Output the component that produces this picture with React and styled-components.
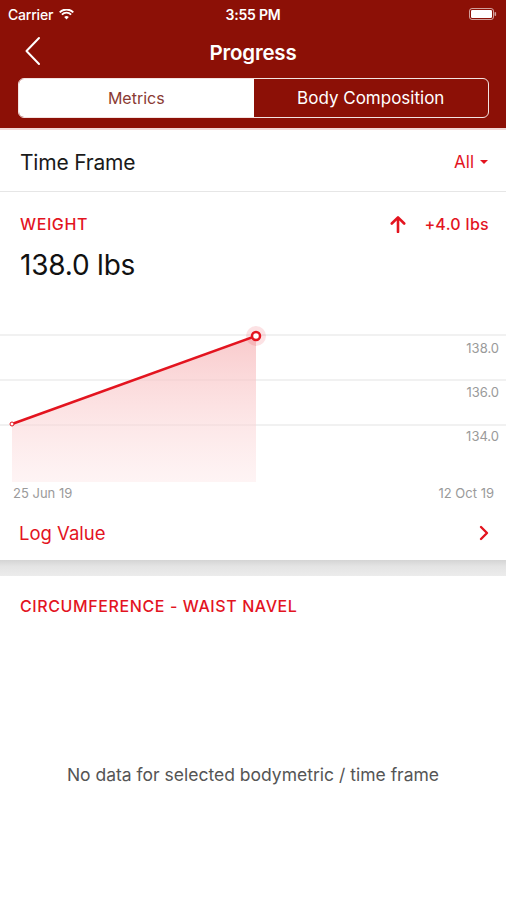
import React from "react";
import styled, { createGlobalStyle } from "styled-components";

const RED = "#8c1006";
const ACCENT = "#e3141f";

const Global = createGlobalStyle`
  html, body { margin: 0; padding: 0; background: #fff; }
  body { font-family: Inter, "Noto Sans", sans-serif; -webkit-font-smoothing: antialiased; }
  * { box-sizing: border-box; }
`;

const Page = styled.div`
  width: 506px;
  height: 900px;
  overflow: hidden;
  display: flex;
  flex-direction: column;
  background: #fff;
`;

const Header = styled.header`
  background: ${RED};
  color: #fff;
  display: flex;
  flex-direction: column;
  padding-bottom: 10px;
  border-bottom: 2px solid #f2d9d7;
`;

const StatusBar = styled.div`
  height: 28px;
  display: grid;
  grid-template-columns: 1fr auto 1fr;
  align-items: center;
  padding: 0 8px 0 8px;
  font-size: 14px;
  font-weight: 600;
  letter-spacing: -0.2px;
`;

const StatusLeft = styled.div`
  display: flex;
  align-items: center;
  gap: 6px;
  font-weight: 500;
`;

const StatusRight = styled.div`
  display: flex;
  justify-content: flex-end;
  padding-right: 1px;
`;

const NavBar = styled.div`
  height: 48px;
  position: relative;
  display: flex;
  align-items: center;
  justify-content: center;
`;

const BackButton = styled.div`
  position: absolute;
  left: 24px;
  top: 8px;
  display: flex;
`;

const Title = styled.h1`
  margin: 0;
  font-size: 20.5px;
  font-weight: 600;
  letter-spacing: -0.2px;
`;

const Segmented = styled.div`
  margin: 2px 17px 0 18px;
  height: 40px;
  border: 1.5px solid #f3e3e1;
  border-radius: 6px;
  display: grid;
  grid-template-columns: 1fr 1fr;
  overflow: hidden;
`;

const Segment = styled.div`
  display: flex;
  align-items: center;
  justify-content: center;
  font-size: ${(p) => (p.$active ? "16px" : "17px")};
  background: ${(p) => (p.$active ? "#fff" : "transparent")};
  color: ${(p) => (p.$active ? "#8a3a33" : "#fff")};
  font-weight: 400;
`;

const Card = styled.section`
  background: #fff;
  display: flex;
  flex-direction: column;
`;

const TimeRow = styled.div`
  height: 62px;
  display: flex;
  align-items: center;
  justify-content: space-between;
  padding: 3px 18px 0 20px;
  border-bottom: 1.5px solid #e6e6e6;
`;

const RowLabel = styled.span`
  font-size: 21px;
  color: #1a1a1a;
  letter-spacing: -0.2px;
`;

const Dropdown = styled.span`
  display: flex;
  align-items: center;
  gap: 6px;
  color: ${ACCENT};
  font-size: 17px;
`;

const Caret = styled.span`
  width: 0;
  height: 0;
  border-left: 4px solid transparent;
  border-right: 4px solid transparent;
  border-top: 4px solid ${ACCENT};
`;

const MetricHead = styled.div`
  display: flex;
  align-items: center;
  justify-content: space-between;
  padding: 16px 17px 0 20px;
  height: 48px;
`;

const MetricLabel = styled.span`
  color: ${ACCENT};
  font-size: 16px;
  font-weight: 500;
  letter-spacing: 0.6px;
`;

const Change = styled.span`
  display: flex;
  align-items: center;
  gap: 18px;
  color: ${ACCENT};
  font-size: 16px;
  font-weight: 500;
  letter-spacing: 0.3px;
`;

const BigValue = styled.div`
  padding: 8px 20px 0;
  font-size: 28px;
  line-height: 34px;
  color: #111;
  height: 60px;
  letter-spacing: -0.2px;
`;

const ChartWrap = styled.div`
  height: 208px;
`;

const LogRow = styled.div`
  height: 52px;
  display: flex;
  align-items: center;
  justify-content: space-between;
  padding: 0 17px 2px 19px;
  color: ${ACCENT};
  font-size: 18.5px;
`;

const Gap = styled.div`
  height: 16px;
  background: linear-gradient(#d4d4d4, #e4e4e4 40%, #ececec);
`;

const Card2 = styled(Card)`
  flex: 1;
`;

const Card2Head = styled.div`
  padding: 20px 20px 0;
  height: 62px;
`;

const Empty = styled.div`
  flex: 1;
  display: flex;
  justify-content: center;
  padding-top: 126px;
  color: #555;
  font-size: 17.5px;
`;

function Chart() {
  const x0 = 12, y0 = 424, x1 = 256, y1 = 336;
  return (
    <svg width="506" height="208" viewBox="0 300 506 208" style={{ display: "block" }}>
      <defs>
        <linearGradient id="fill" x1="0" y1="0" x2="0" y2="1">
          <stop offset="0" stopColor="#f7b9bb" stopOpacity="0.75" />
          <stop offset="1" stopColor="#fde3e4" stopOpacity="0.4" />
        </linearGradient>
      </defs>
      {[335, 380, 425].map((y) => (
        <line key={y} x1="0" x2="506" y1={y} y2={y} stroke="#ececec" strokeWidth="1.5" />
      ))}
      <polygon points={`${x0},${y0} ${x1},${y1} ${x1},482 ${x0},482`} fill="url(#fill)" />
      <line x1={x0} y1={y0} x2={x1} y2={y1} stroke={ACCENT} strokeWidth="2.5" />
      <circle cx={x0} cy={y0} r="2" fill="#fff" stroke={ACCENT} strokeWidth="1" />
      <circle cx={x1} cy={y1} r="10" fill="#e3141f" opacity="0.12" />
      <circle cx={x1} cy={y1} r="4" fill="#fff" stroke={ACCENT} strokeWidth="2.5" />
      <g fill="#9a9a9a" fontSize="13" fontFamily="Inter, sans-serif">
        <text x="499" y="353" textAnchor="end">138.0</text>
        <text x="499" y="397" textAnchor="end">136.0</text>
        <text x="499" y="441" textAnchor="end">134.0</text>
        <text x="13" y="498">25 Jun 19</text>
        <text x="494" y="498" textAnchor="end">12 Oct 19</text>
      </g>
    </svg>
  );
}

export default function App() {
  return (
    <Page>
      <Global />
      <Header>
        <StatusBar>
          <StatusLeft>
            <span>Carrier</span>
            <svg width="15" height="11" viewBox="0 0 15 11">
              <path d="M7.5 10.5 L5.2 8 A3.3 3.3 0 0 1 9.8 8 Z" fill="#fff" />
              <path d="M2.9 5.6 A6.5 6.5 0 0 1 12.1 5.6" stroke="#fff" strokeWidth="1.8" fill="none" />
              <path d="M0.7 3.3 A9.6 9.6 0 0 1 14.3 3.3" stroke="#fff" strokeWidth="1.8" fill="none" />
            </svg>
          </StatusLeft>
          <span>3:55 PM</span>
          <StatusRight>
            <svg width="28" height="12" viewBox="0 0 28 12">
              <rect x="0.5" y="0.5" width="24" height="11" rx="2.5" fill="none" stroke="#fff" strokeWidth="1" opacity="0.6" />
              <rect x="2" y="2" width="21" height="8" rx="1.3" fill="#fff" />
              <rect x="25.5" y="4" width="1.6" height="4" rx="0.8" fill="#fff" opacity="0.6" />
            </svg>
          </StatusRight>
        </StatusBar>
        <NavBar>
          <BackButton>
            <svg width="18" height="30" viewBox="0 0 18 30">
              <path d="M15 2 L2.5 15 L15 28" stroke="#fff" strokeWidth="2" fill="none" strokeLinecap="round" strokeLinejoin="round" />
            </svg>
          </BackButton>
          <Title>Progress</Title>
        </NavBar>
        <Segmented>
          <Segment $active>Metrics</Segment>
          <Segment>Body Composition</Segment>
        </Segmented>
      </Header>

      <Card>
        <TimeRow>
          <RowLabel>Time Frame</RowLabel>
          <Dropdown>
            All <Caret />
          </Dropdown>
        </TimeRow>
        <MetricHead>
          <MetricLabel>WEIGHT</MetricLabel>
          <Change>
            <svg width="16" height="18" viewBox="0 0 16 18">
              <path d="M8 17 V2.5 M1.8 8.5 L8 2.3 L14.2 8.5" stroke={ACCENT} strokeWidth="2.6" fill="none" strokeLinecap="round" strokeLinejoin="round" />
            </svg>
            <span>+4.0 lbs</span>
          </Change>
        </MetricHead>
        <BigValue>138.0 lbs</BigValue>
        <ChartWrap>
          <Chart />
        </ChartWrap>
        <LogRow>
          <span>Log Value</span>
          <svg width="10" height="16" viewBox="0 0 10 16">
            <path d="M2 2 L8 8 L2 14" stroke={ACCENT} strokeWidth="2.4" fill="none" strokeLinecap="round" strokeLinejoin="round" />
          </svg>
        </LogRow>
      </Card>
      <Gap />
      <Card2>
        <Card2Head>
          <MetricLabel>CIRCUMFERENCE - WAIST NAVEL</MetricLabel>
        </Card2Head>
        <Empty>No data for selected bodymetric / time frame</Empty>
      </Card2>
    </Page>
  );
}
